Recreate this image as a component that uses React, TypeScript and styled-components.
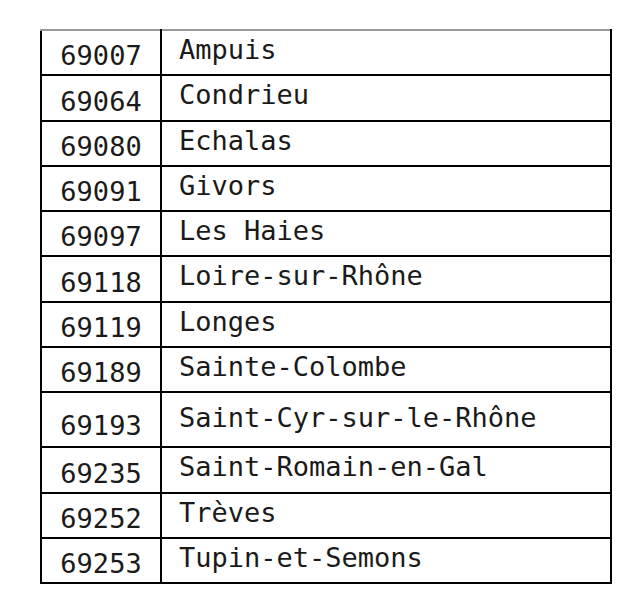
import React from "react";
import styled, { createGlobalStyle } from "styled-components";

type Commune = { code: string; name: string; tall?: boolean };

const communes: Commune[] = [
  { code: "69007", name: "Ampuis" },
  { code: "69064", name: "Condrieu" },
  { code: "69080", name: "Echalas" },
  { code: "69091", name: "Givors" },
  { code: "69097", name: "Les Haies" },
  { code: "69118", name: "Loire-sur-Rhône" },
  { code: "69119", name: "Longes" },
  { code: "69189", name: "Sainte-Colombe" },
  { code: "69193", name: "Saint-Cyr-sur-le-Rhône", tall: true },
  { code: "69235", name: "Saint-Romain-en-Gal" },
  { code: "69252", name: "Trèves" },
  { code: "69253", name: "Tupin-et-Semons" },
];

const App: React.FC = () => {
  return (
    <Page>
      <GlobalStyle />
      <Table>
        <tbody>
          {communes.map((c) => (
            <Row key={c.code} $tall={c.tall}>
              <CodeCell $tall={c.tall}>{c.code}</CodeCell>
              <NameCell $tall={c.tall}>{c.name}</NameCell>
            </Row>
          ))}
        </tbody>
      </Table>
    </Page>
  );
};

const GlobalStyle = createGlobalStyle`
  html, body {
    margin: 0;
    background: #ffffff;
  }
`;

const Page = styled.div`
  padding: 29px 0 0 40px;
  width: 644px;
  height: 608px;
  box-sizing: border-box;
`;

const Table = styled.table`
  border-collapse: collapse;
  width: 572px;
  table-layout: fixed;
  font-family: "DejaVu Sans Mono", "Liberation Mono", monospace;
  font-size: 27px;
  line-height: 31px;
  color: #1a1a1a;
  border-top: 2px solid #9a9a9a;
`;

const Row = styled.tr<{ $tall?: boolean }>`
  height: ${(p) => (p.$tall ? "55px" : "45.3px")};

  &:first-child > td {
    border-top: 2px solid #9a9a9a;
  }
`;

const CodeCell = styled.td<{ $tall?: boolean }>`
  width: 120px;
  box-sizing: border-box;
  border: 2px solid #000;
  text-align: center;
  vertical-align: bottom;
  padding: 0 0 ${(p) => (p.$tall ? "5px" : "3px")} 0;
  white-space: nowrap;
`;

const NameCell = styled.td<{ $tall?: boolean }>`
  border: 2px solid #000;
  text-align: left;
  vertical-align: top;
  padding: ${(p) => (p.$tall ? "9px" : "3px")} 0 0 17px;
  white-space: nowrap;
`;

export default App;
